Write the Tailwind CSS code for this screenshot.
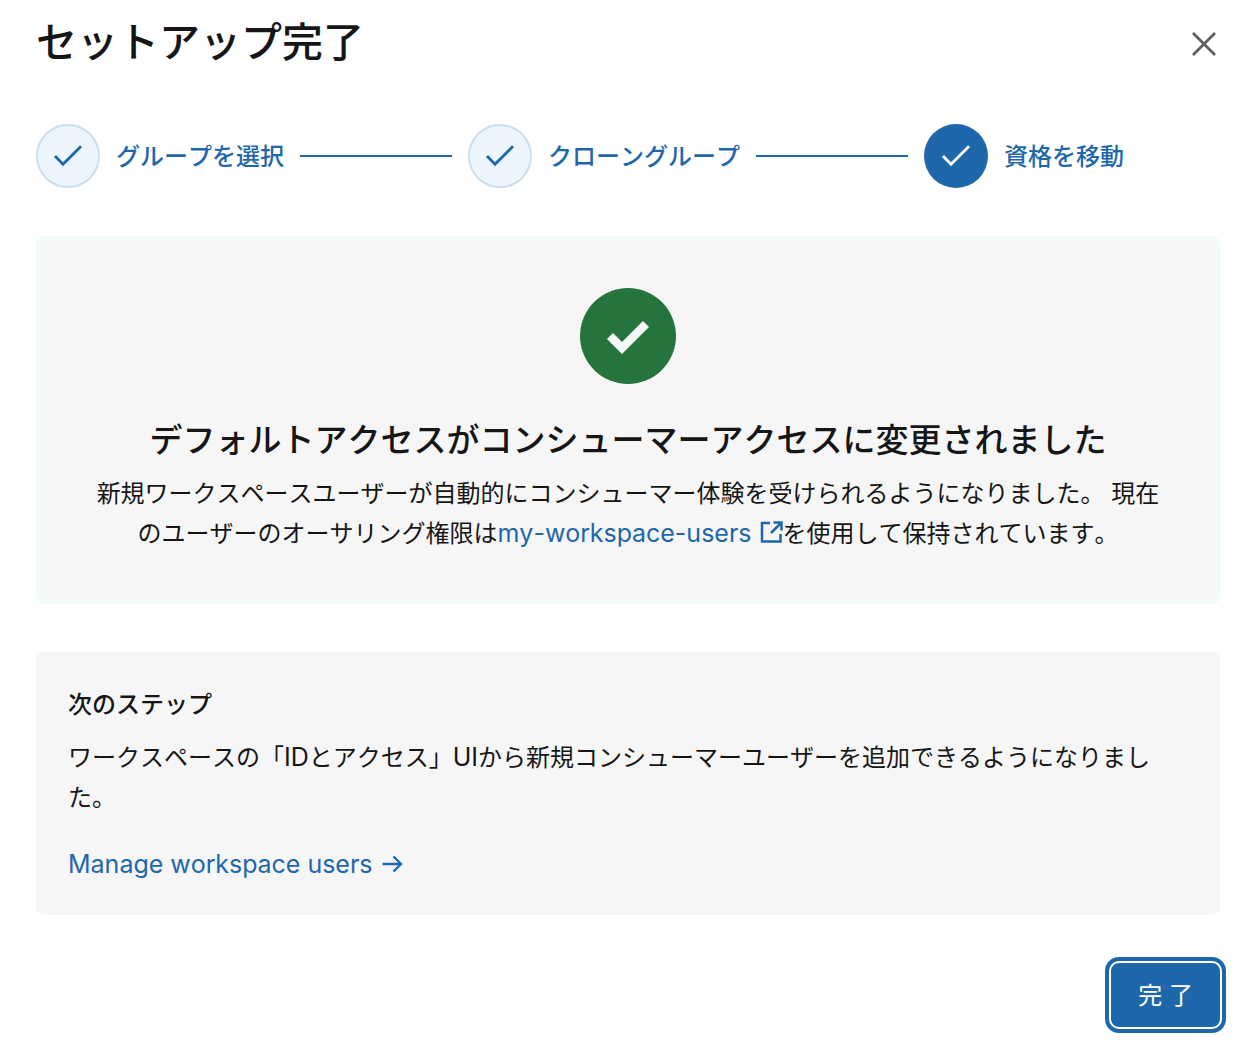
<!DOCTYPE html>
<html lang="ja">
<head>
  <meta charset="UTF-8">
  <meta name="viewport" content="width=device-width, initial-scale=1.0">
  <script src="https://cdn.jsdelivr.net/npm/@tailwindcss/browser@4"></script>
  <title>セットアップ完了</title>
</head>

<body class="bg-white text-[#161616] text-[24px] leading-10 [font-kerning:none] font-['Inter','Noto_Sans_CJK_JP',sans-serif]">
  <div role="dialog" aria-labelledby="title">
    <header class="flex items-start justify-between pt-3 pl-9 pr-[22px]">
      <h1 id="title" class="text-[41px] leading-[60px] font-medium">セットアップ完了</h1>
      <button type="button" aria-label="閉じる" class="mt-2 p-2 text-[#5f5f5f]">
        <svg class="h-8 w-8" viewBox="0 0 32 32" fill="none" stroke="currentColor" stroke-width="2.8" aria-hidden="true">
          <path d="M5 5l22 22M27 5L5 27" />
        </svg>
      </button>
    </header>

    <main class="pl-9 pr-[30px]">
      <!-- Steps -->
      <ol class="mt-[52px] flex items-center gap-4 pr-24 font-medium text-[#1f67ab]">
        <li class="flex flex-auto items-center gap-4">
          <span class="flex h-16 w-16 shrink-0 items-center justify-center rounded-full border-2 border-[#cbdff1] bg-[#edf6ff]">
            <svg class="h-8 w-8" viewBox="0 0 32 32" fill="none" stroke="currentColor" stroke-width="2.8" aria-hidden="true">
              <path d="M3 16l8 8.3L29 6.3" />
            </svg>
          </span>
          <span class="pt-0.5 whitespace-nowrap">グループを選択</span>
          <span class="h-0.5 flex-1 bg-[#1f67ab]"></span>
        </li>
        <li class="flex flex-auto items-center gap-4">
          <span class="flex h-16 w-16 shrink-0 items-center justify-center rounded-full border-2 border-[#cbdff1] bg-[#edf6ff]">
            <svg class="h-8 w-8" viewBox="0 0 32 32" fill="none" stroke="currentColor" stroke-width="2.8" aria-hidden="true">
              <path d="M3 16l8 8.3L29 6.3" />
            </svg>
          </span>
          <span class="pt-0.5 whitespace-nowrap">クローングループ</span>
          <span class="h-0.5 flex-1 bg-[#1f67ab]"></span>
        </li>
        <li class="flex items-center gap-4" aria-current="step">
          <span class="flex h-16 w-16 shrink-0 items-center justify-center rounded-full bg-[#1f67ab] text-white">
            <svg class="h-8 w-8" viewBox="0 0 32 32" fill="none" stroke="currentColor" stroke-width="2.8" aria-hidden="true">
              <path d="M3 16l8 8.3L29 6.3" />
            </svg>
          </span>
          <span class="pt-0.5 whitespace-nowrap">資格を移動</span>
        </li>
      </ol>

      <!-- Result -->
      <section class="mt-12 rounded-lg border-4 border-[#f2fcf6] bg-[#f6f6f6] px-12 pt-12 pb-[46px] text-center">
        <svg class="mx-auto h-24 w-24" viewBox="0 0 96 96" aria-hidden="true">
          <circle cx="48" cy="48" r="48" fill="#25733d" />
          <path d="M30 48l12 12 24-24" fill="none" stroke="#f6f6f6" stroke-width="8.5" />
        </svg>
        <h2 class="mt-8 text-[33px] leading-[48px] font-medium">デフォルトアクセスがコンシューマーアクセスに変更されました</h2>
        <p class="mt-2.5">新規ワークスペースユーザーが自動的にコンシューマー体験を受けられるようになりました。 現在のユーザーのオーサリング権限は<a href="#" class="text-[25px] leading-none text-[#1f67ab]">my-workspace-users <svg class="inline h-6 w-6 align-[-2px]" viewBox="0 0 24 24" fill="none" stroke="currentColor" stroke-width="2.5" aria-hidden="true"><path d="M11 3H3v18.500h18.500V14M14.500 2.500h8v8M22.500 2.500L12 13" /></svg></a>を使用して保持されています。</p>
      </section>

      <!-- Next steps -->
      <section class="mt-12 rounded-lg bg-[#f6f6f6] px-8 pt-[33px] pb-[31px]">
        <h3 class="font-medium">次のステップ</h3>
        <p class="mt-[13px]">ワークスペースの「<span class="text-[25px] leading-none">ID</span>とアクセス」<span class="text-[25px] leading-none">UI</span>から新規コンシューマーユーザーを追加できるようになりました。</p>
        <a href="#" class="mt-[26px] flex w-fit items-center gap-2 text-[25px] text-[#1f67ab]">Manage workspace users
          <svg class="h-6 w-6" viewBox="0 0 24 24" fill="none" stroke="currentColor" stroke-width="2.4" aria-hidden="true">
            <path d="M1.500 12H20M12.500 4.500L20 12l-7.500 7.500" />
          </svg>
        </a>
      </section>
    </main>

    <footer class="flex justify-end pt-[46px] pr-7 pb-7">
      <button type="button" class="h-[68px] rounded-[10px] border-2 border-white bg-[#1f67ab] px-[27px] pt-0.5 text-white outline-4 outline-[#1f67ab]">完 了</button>
    </footer>
  </div>
</body>
</html>
